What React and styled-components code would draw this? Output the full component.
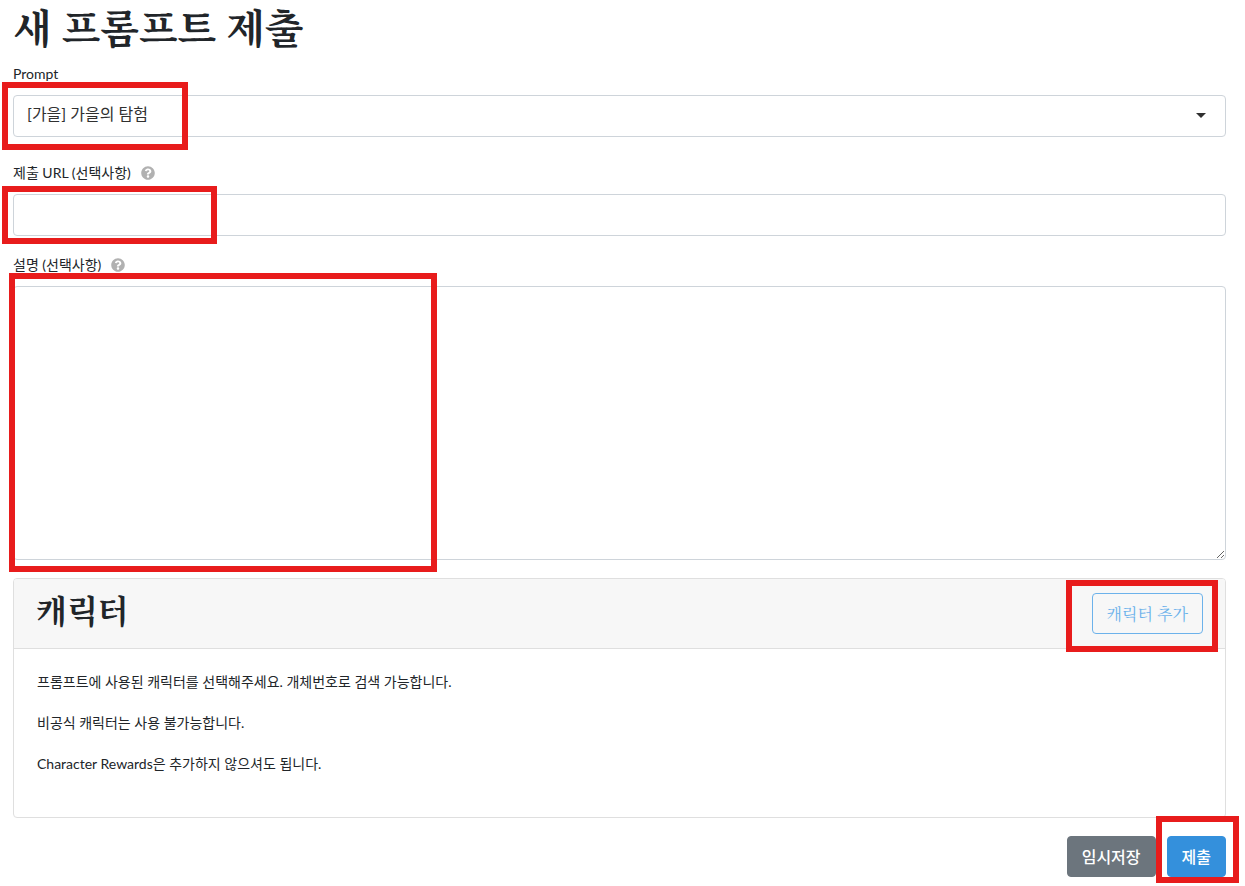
import React from "react";
import styled, { createGlobalStyle } from "styled-components";
import { FaQuestionCircle } from "react-icons/fa";

const GlobalStyle = createGlobalStyle`
  *, *::before, *::after { box-sizing: border-box; }
  body {
    margin: 0;
    background: #fff;
    color: #212529;
    font-family: Lato, "Noto Sans CJK KR", sans-serif;
    font-size: 14px;
    line-height: 22px;
  }
  button, input, select, textarea { font: inherit; color: inherit; }
`;

const serif = `"Noto Serif CJK KR", "Nanum Myeongjo", "Noto Sans CJK KR", serif`;

const Page = styled.form`
  padding: 0 19px 8px 13px;
`;

const Title = styled.h1`
  margin: 0 0 12px;
  font-family: ${serif};
  font-size: 40px;
  font-weight: 700;
  line-height: 52px;
`;

const Field = styled.div`
  margin-bottom: ${(p) => p.$gap || 18}px;
`;

const LabelRow = styled.div`
  display: flex;
  align-items: center;
  gap: 10px;
  height: 20px;
  margin-bottom: 11px;
`;

const HelpIcon = styled(FaQuestionCircle)`
  width: 14px;
  height: 14px;
  color: #b1b1b1;
`;

const Control = styled.div`
  position: relative;
  display: flex;
`;

const Select = styled.select`
  appearance: none;
  width: 100%;
  height: 42px;
  padding: 0 40px 4px 13px;
  border: 1px solid #ced4da;
  border-radius: 4px;
  background: #fff;
  color: #303030;
  font-size: 16px;
`;

const Caret = styled.svg`
  position: absolute;
  top: 18px;
  right: 20px;
  width: 10px;
  height: 5px;
  fill: #303030;
  pointer-events: none;
`;

const Input = styled.input`
  width: 100%;
  height: 42px;
  padding: 6px 12px;
  border: 1px solid #ced4da;
  border-radius: 4px;
  background: #fff;
`;

const TextArea = styled.textarea`
  width: 100%;
  height: 274px;
  padding: 6px 12px;
  border: 1px solid #ced4da;
  border-radius: 4px;
  background: #fff;
  resize: vertical;
`;

const Card = styled.section`
  margin-bottom: 18px;
  border: 1px solid #dfdfdf;
  border-radius: 4px;
`;

const CardHeader = styled.header`
  display: flex;
  justify-content: space-between;
  align-items: flex-start;
  padding: 14px 22px;
  border-bottom: 1px solid #dfdfdf;
  border-radius: 3px 3px 0 0;
  background: #f7f7f7;
`;

const CardTitle = styled.h2`
  margin: 0;
  font-family: ${serif};
  font-size: 32px;
  font-weight: 700;
  line-height: 32px;
`;

const CardBody = styled.div`
  padding: 22px 23px 23px;
`;

const Paragraph = styled.p`
  margin: 0 0 19px;
`;

const Button = styled.button`
  height: 41px;
  padding: 0 14px;
  border: 1px solid ${(p) => p.$color};
  border-radius: 4px;
  background: ${(p) => (p.$outline ? "transparent" : p.$color)};
  color: ${(p) => (p.$outline ? p.$color : "#fff")};
  font-family: ${(p) => (p.$outline ? serif : "inherit")};
  font-size: 16px;
  font-weight: ${(p) => (p.$outline ? 400 : 500)};
  white-space: nowrap;
`;

const Actions = styled.div`
  display: flex;
  justify-content: flex-end;
  gap: 11px;
`;

const Marked = styled.div`
  position: relative;
  display: flex;
`;

const Highlight = styled.span`
  position: absolute;
  top: ${(p) => p.$top}px;
  left: ${(p) => p.$left}px;
  width: ${(p) => p.$width}px;
  height: ${(p) => p.$height}px;
  border: 6px solid #e81c1c;
  pointer-events: none;
`;

export default function App() {
  return (
    <>
      <GlobalStyle />
      <Page onSubmit={(e) => e.preventDefault()}>
        <Title>새 프롬프트 제출</Title>

        <Field $gap={26}>
          <LabelRow>
            <label htmlFor="prompt">Prompt</label>
          </LabelRow>
          <Control>
            <Select id="prompt" defaultValue="autumn">
              <option value="autumn">[가을] 가을의 탐험</option>
            </Select>
            <Caret viewBox="0 0 10 5" aria-hidden="true">
              <path d="M0 0H10L5 5Z" />
            </Caret>
            <Highlight $top={-13} $left={-11} $width={186} $height={68} />
          </Control>
        </Field>

        <Field $gap={19}>
          <LabelRow>
            <label htmlFor="url">제출 URL (선택사항)</label>
            <HelpIcon aria-hidden="true" />
          </LabelRow>
          <Control>
            <Input id="url" type="text" />
            <Highlight $top={-8} $left={-11} $width={215} $height={58} />
          </Control>
        </Field>

        <Field>
          <LabelRow>
            <label htmlFor="description">설명 (선택사항)</label>
            <HelpIcon aria-hidden="true" />
          </LabelRow>
          <Control>
            <TextArea id="description" />
            <Highlight $top={-13} $left={-4} $width={428} $height={299} />
          </Control>
        </Field>

        <Card>
          <CardHeader>
            <CardTitle>캐릭터</CardTitle>
            <Marked>
              <Button type="button" $outline $color="#6cb2eb">
                캐릭터 추가
              </Button>
              <Highlight $top={-13} $left={-26} $width={152} $height={72} />
            </Marked>
          </CardHeader>
          <CardBody>
            <Paragraph>
              프롬프트에 사용된 캐릭터를 선택해주세요. 개체번호로 검색 가능합니다.
            </Paragraph>
            <Paragraph>비공식 캐릭터는 사용 불가능합니다.</Paragraph>
            <Paragraph>Character Rewards은 추가하지 않으셔도 됩니다.</Paragraph>
          </CardBody>
        </Card>

        <Actions>
          <Button type="button" $color="#6c757d">
            임시저장
          </Button>
          <Marked>
            <Button type="submit" $color="#3490dc">
              제출
            </Button>
            <Highlight $top={-20} $left={-11} $width={83} $height={67} />
          </Marked>
        </Actions>
      </Page>
    </>
  );
}
